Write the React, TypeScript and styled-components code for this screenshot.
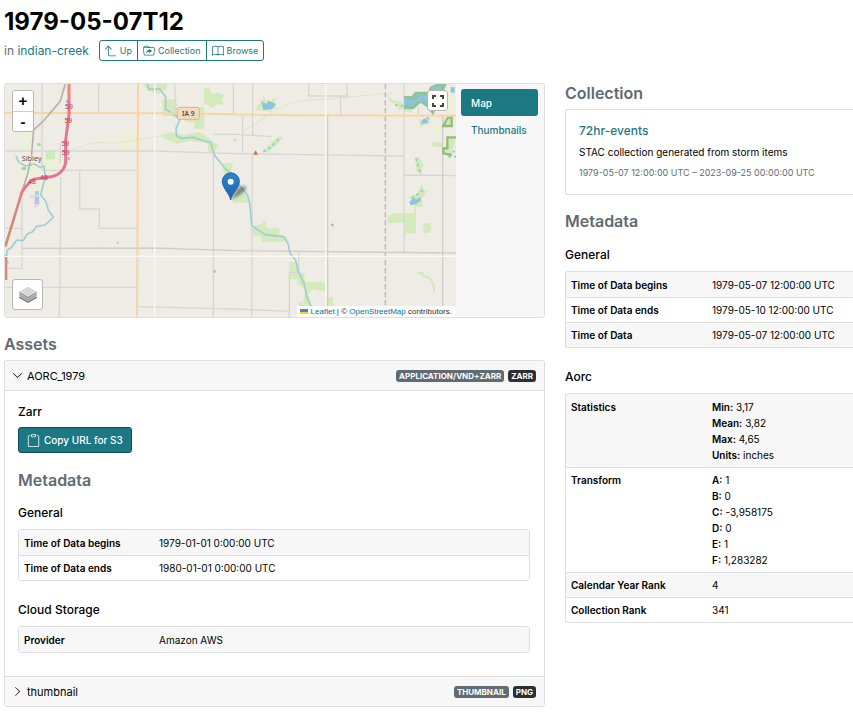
import React, { useState } from "react";
import styled, { createGlobalStyle } from "styled-components";
import {
  BsArrow90DegUp,
  BsBook,
  BsChevronDown,
  BsChevronRight,
  BsClipboard,
  BsFolderSymlink,
} from "react-icons/bs";

const teal = "#1c7883";
const slate = "#5f6a72";
const line = "#dcdee0";
const panel = "#f7f7f7";

const GlobalStyle = createGlobalStyle`
  *, *::before, *::after { box-sizing: border-box; }
  body {
    margin: 0;
    background: #fff;
    color: #000;
    font: 400 10px/16px Inter, "Liberation Sans", sans-serif;
    overflow-x: hidden;
  }
  button { font: inherit; cursor: pointer; }
  h1, h2, h3, h4, p { margin: 0; }
  a { color: ${teal}; text-decoration: none; }
`;

const Page = styled.div`
  padding: 6px 0 9px 4px;
`;

const Title = styled.h1`
  font-size: 24px;
  line-height: 32px;
  font-weight: 700;
`;

const SubHeader = styled.div`
  display: flex;
  align-items: center;
  gap: 10px;
  margin: 2px 0 22px;
`;

const Location = styled.p`
  font-size: 12px;
  line-height: 20px;
  color: ${slate};
`;

const ButtonGroup = styled.nav`
  display: flex;
  border: 1px solid ${teal};
  border-radius: 3px;
`;

const GroupLink = styled.a`
  display: flex;
  align-items: center;
  gap: 3px;
  height: 19px;
  padding: 0 5px;
  font-size: 9px;
  & + & { border-left: 1px solid ${teal}; }
  svg { width: 12px; height: 12px; }
`;

const Columns = styled.main`
  display: grid;
  grid-template-columns: minmax(0, 541fr) minmax(0, 288fr);
  column-gap: 20px;
  align-items: start;
`;

const SectionTitle = styled.h2`
  font-size: 16px;
  line-height: 20px;
  font-weight: 600;
  color: ${slate};
`;

const GroupTitle = styled.h3`
  font-size: 12px;
  line-height: 16px;
  font-weight: 500;
`;

const Section = styled.section<{ $gap?: number }>`
  display: flex;
  flex-direction: column;
  gap: ${(p) => p.$gap ?? 6}px;
`;

const LeftColumn = styled.div`
  display: flex;
  flex-direction: column;
  gap: 16px;
`;

const RightColumn = styled.div`
  display: flex;
  flex-direction: column;
  gap: 16px;
`;

const MapCard = styled.section`
  display: flex;
  background: ${panel};
  border: 1px solid ${line};
  border-radius: 3px;
  overflow: hidden;
`;

const MapPane = styled.div`
  position: relative;
  flex: 1;
  min-width: 0;
  height: 233px;
  overflow: hidden;
`;

const MapDrawing = styled.svg`
  display: block;
  width: 100%;
  height: 100%;
`;

const ZoomControl = styled.div`
  position: absolute;
  top: 6px;
  left: 7px;
  display: flex;
  flex-direction: column;
  width: 22px;
  border: 1px solid #b9b7b2;
  border-radius: 3px;
  overflow: hidden;
`;

const ZoomButton = styled.button`
  height: 20px;
  padding: 0;
  border: 0;
  background: #fff;
  font: 700 15px/20px "Liberation Sans", sans-serif;
  & + & { border-top: 1px solid #ccc; }
`;

const IconControl = styled.button<{ $size: number }>`
  position: absolute;
  display: grid;
  place-items: center;
  width: ${(p) => p.$size}px;
  height: ${(p) => p.$size}px;
  padding: 0;
  background: #fff;
  border: 1px solid #b9b7b2;
  border-radius: 3px;
`;

const FullscreenControl = styled(IconControl)`
  top: 6px;
  right: 8px;
`;

const LayersControl = styled(IconControl)`
  bottom: 7px;
  left: 7px;
`;

const Attribution = styled.div`
  position: absolute;
  right: 0;
  bottom: 0;
  display: flex;
  align-items: center;
  gap: 3px;
  padding: 0 4px 0 3px;
  background: rgba(255, 255, 255, 0.8);
  color: #333;
  font: 8px/11px "Liberation Sans", sans-serif;
  white-space: nowrap;
  a { color: #0078a8; }
`;

const TabList = styled.div`
  display: flex;
  flex-direction: column;
  flex: 0 0 88px;
  min-width: 0;
  padding: 5px 6px 0 5px;
`;

const Tab = styled.button<{ $active: boolean }>`
  height: 27px;
  padding: 0 10px;
  border: 0;
  border-radius: 3px;
  text-align: left;
  font-weight: 500;
  color: ${(p) => (p.$active ? "#fff" : teal)};
  background: ${(p) => (p.$active ? teal : "transparent")};
`;

const Accordion = styled.div`
  border: 1px solid ${line};
  border-radius: 3px;
  overflow: hidden;
`;

const AssetHeader = styled.button`
  display: flex;
  align-items: center;
  gap: 4px;
  width: 100%;
  height: 29px;
  padding: 0 8px 0 7px;
  border: 0;
  background: ${panel};
  color: #000;
  text-align: left;
  svg { width: 11px; height: 11px; }
`;

const AssetName = styled.span`
  flex: 1;
  font-size: 11px;
`;

const Badge = styled.span<{ $dark?: boolean }>`
  padding: 0 3px;
  border-radius: 3px;
  background: ${(p) => (p.$dark ? "#2b2f33" : "#616b73")};
  color: #fff;
  font-size: 8px;
  line-height: 12px;
  font-weight: 700;
  text-transform: uppercase;
`;

const AssetBody = styled.div`
  display: flex;
  flex-direction: column;
  gap: 17px;
  padding: 13px 14px 23px 13px;
  border: solid ${line};
  border-width: 1px 0;
`;

const CopyButton = styled.button`
  display: flex;
  align-items: center;
  align-self: flex-start;
  gap: 4px;
  height: 26px;
  padding: 0 8px;
  border: 1px solid #124c54;
  border-radius: 3px;
  background: ${teal};
  color: #fff;
  font-weight: 500;
  svg { width: 13px; height: 13px; }
`;

const Groups = styled.div`
  display: flex;
  flex-direction: column;
  gap: 21px;
`;

const MetaTable = styled.table<{ $label: number; $bleed?: boolean }>`
  width: 100%;
  border: 1px solid ${line};
  border-right-width: ${(p) => (p.$bleed ? 0 : 1)}px;
  border-radius: ${(p) => (p.$bleed ? "3px 0 0 3px" : "3px")};
  border-spacing: 0;
  overflow: hidden;
  tr:nth-child(odd) { background: ${panel}; }
  th, td { padding: 5px 5px 4px; vertical-align: top; text-align: left; }
  tr + tr > * { padding-top: 4px; border-top: 1px solid ${line}; }
  th { width: ${(p) => p.$label}px; font-weight: 600; }
`;

const ValueList = styled.ul`
  margin: 0;
  padding: 0;
  list-style: none;
  b { font-weight: 600; }
`;

const CollectionCard = styled.article`
  display: flex;
  flex-direction: column;
  gap: 5px;
  padding: 12px 13px;
  border: 1px solid ${line};
  border-right: 0;
  border-radius: 3px 0 0 3px;
`;

const CardLink = styled.a`
  font-size: 12px;
  line-height: 17px;
  font-weight: 500;
`;

const CardText = styled.p`
  line-height: 16px;
`;

const CardDates = styled.p`
  margin-bottom: 1px;
  font-size: 9px;
  line-height: 16px;
  color: ${slate};
`;

/* ---- map ---- */

const parks = [
  "M428 12H500V28L475 42L445 32Z",
  "M487 58H530V95H560V108L540 120L515 108H487Z",
  "M612 25L628 20L635 42L655 38L672 45L665 58L672 72L645 75L640 85L612 68Z",
  "M583 82H613V146H583V128L555 124V112H583Z",
  "M480 168L510 156L555 165L600 155L640 185L656 195L640 220L625 215L622 190L570 182L530 192Z",
  "M665 250H698V262L690 285L712 300V330L740 345L748 368H700L690 320L672 280Z",
  "M758 440L785 433V422L800 424L798 440L812 450V445H838V465L862 472V485H785V472L758 466Z",
  "M868 546H888L900 580H912L915 606H950L975 608V635L940 628L925 640L932 672L945 690V700H896V665H910L915 628L895 612V598H868Z",
  "M985 652H1000V680H975V665Z",
  "M1178 400H1242V355L1262 350L1270 380H1248V460H1218L1210 495L1214 460V428H1178V432L1162 428V412Z",
  "M1270 430H1288L1294 445L1290 460H1270Z",
  "M1160 45L1180 60L1205 66L1215 80L1195 92L1192 74L1170 66Z",
  "M1215 78H1235V95H1210Z",
  "M1298 185H1330V200H1298Z",
  "M1255 115L1270 125L1290 112V128L1262 140Z",
  "M788 210L800 202L820 182L840 168L848 175L830 195L800 220Z",
  "M1225 350L1250 342L1265 312L1275 335L1285 328L1270 352L1240 362Z",
  "M1245 230L1258 232L1268 252L1275 250L1265 265L1268 288L1250 275Z",
  "M1245 578L1270 575L1272 588Z",
  "M766 92L772 75L782 70L778 55L790 62L788 44L798 60L815 64L820 52L829 54L822 70L832 86L815 84L815 96L790 92Z",
];

const scrub = [
  "M355 155H418L430 205L375 212L355 190Z",
  "M66 150H100V212H66Z",
  "M1300 105H1328V165H1300Z",
  "M1328 52H1368V100L1328 112Z",
  "M45 270L120 230L170 240L180 270L150 285L120 265L90 300L60 290Z",
  "M95 325L120 308H170V340H95Z",
];

const roads = [
  "M126 12V271M296 12V97M525 12V98M700 12V101M181 190V250M182 290L181 500L178 713",
  "M15 213H464L705 221L1210 228M126 271H414M239 271V387H298V445H412",
  "M66 345V565H15M15 445H66M15 622H410M640 219V713M414 680L705 687L868 694",
  "M640 163H705L815 170M728 107V222M758 12V165M757 226L755 713M926 12V48H1041V12M1022 48V105",
  "M1212 12V518M1212 285L1368 287M896 518V577H868V713M1255 80V105M1328 112V150",
];

const Shields = () => (
  <g fontFamily="Liberation Sans, sans-serif" fontSize="21" fill="#b8405c" textAnchor="middle">
    <text x="207" y="86">59</text>
    <text x="205" y="129">59</text>
    <text x="196" y="198">59</text>
    <text x="197" y="225">59</text>
    <text x="96" y="311">48</text>
    <text x="132" y="299">48</text>
  </g>
);

const StreetMap = () => (
  <MapDrawing viewBox="15 12 1353 699" preserveAspectRatio="xMinYMin slice" role="img" aria-label="Street map">
    <defs>
      <linearGradient id="pin" x1="0" y1="0" x2="0" y2="1">
        <stop offset="0" stopColor="#2f86cc" />
        <stop offset="1" stopColor="#1c61ab" />
      </linearGradient>
      <filter id="soft" x="-30%" y="-30%" width="160%" height="160%">
        <feGaussianBlur stdDeviation="4" />
      </filter>
    </defs>
    <rect x="0" y="0" width="2400" height="1400" fill="#efece5" />
    {scrub.map((d) => (
      <path key={d} d={d} fill="#edf0d8" />
    ))}
    {parks.map((d) => (
      <path key={d} d={d} fill="#d4e9bc" />
    ))}
    <path d="M138 215H165V238H138Z" fill="#c5eeba" />
    <path d="M95 345H118V375L102 385V355H90V345Z" fill="#e3d5ea" />
    <path d="M205 213C250 200 275 180 330 190C400 185 440 175 495 165M730 155C780 125 830 80 900 62C990 60 1080 45 1180 40" fill="none" stroke="#e0e7cf" strokeWidth="4" />
    <path d="M1270 588C1295 590 1302 610 1302 635" fill="none" stroke="#d2e9b8" strokeWidth="6" />
    <g fill="none" stroke="#d8d6d3" strokeWidth="4">
      {roads.map((d) => (
        <path key={d} d={d} />
      ))}
    </g>
    <path d="M983 107V713M66 505L464 504L705 512L1368 519M1328 107V713" fill="none" stroke="#cfcdcb" strokeWidth="4" />
    <path d="M1156 12V713" stroke="#cfb8cb" strokeWidth="5" strokeDasharray="16 8" />
    <g fill="none" stroke="#9fced5" strokeWidth="5" strokeLinejoin="round">
      <path d="M442 12L446 28L478 26L497 50V88L520 102L540 118L528 145L530 168L545 175L580 172L605 180L632 188L645 228L675 265L700 290L725 325L743 345L750 375L755 437L795 464L850 470L864 490L870 520L887 541L895 575L912 610L922 655L935 680" />
      <path d="M48 228L55 245L75 258L105 252L120 262L132 258L136 290L122 345L138 365L145 390L160 412L135 435L108 440L98 455L82 462L70 482L50 480L35 502L22 510L18 540L26 550" />
    </g>
    <path d="M1212 48L1235 48L1245 35H1285L1290 20L1310 12H1340L1330 35L1310 75L1300 108L1285 85L1262 68L1240 88L1212 86Z" fill="#8fc29e" />
    <g fill="#8fc4d8">
      <path d="M1212 55L1240 62L1262 45H1285L1300 22H1325L1310 65L1298 82L1280 66L1250 64L1240 78L1212 76Z" />
      <path d="M784 64L800 72L805 62L828 72L818 86L790 90Z" />
      <path d="M1228 365L1240 355L1252 358L1262 350V362L1248 372L1232 376Z" />
      <path d="M1268 118L1280 115L1285 128L1262 132Z" />
      <path d="M1352 22H1364V38H1352Z" />
      <path d="M198 60H205V68H198ZM202 232H210V240H202ZM993 431H1001V439H993Z" />
      <path d="M105 333H117V345H105ZM105 350H117V372H105Z" opacity="0.7" />
    </g>
    <g stroke="#8dcbc4" strokeWidth="5" fill="none" strokeDasharray="8 9">
      <path d="M790 215L815 200L835 178M1185 75L1210 78M1248 235L1255 260L1262 280M1235 355L1270 330M1265 105L1295 120" />
      <path d="M1340 215H1365M1345 230H1368M1350 200H1368" />
    </g>
    <path d="M1355 110V138H1330L1342 115ZM1368 172H1342V205H1330V220L1355 225" fill="#d5e8b9" stroke="#8fbd7d" strokeWidth="7" />
    <path d="M65 262H78V270H65ZM112 190H122V197H112ZM350 485H356V491H350ZM641 571H648V578H641ZM702 178H707V184H702Z" fill="#a4ceb1" />
    <path d="M15 99L540 100L870 106L1368 107M414 12L413 345L411 713" fill="none" stroke="#f8d3a6" strokeWidth="6" />
    <path d="M196 12L180 65L130 123L101 150L94 232L82 285L62 345" fill="none" stroke="#b4b2b0" strokeWidth="5" />
    <path d="M207 12V105L197 180V248C190 282 165 292 130 293L100 298C78 315 66 335 62 345" fill="none" stroke="#e8748f" strokeWidth="9" />
    <path d="M207 12V60" stroke="#f08a76" strokeWidth="6" />
    <path d="M66 335L16 500M18 525V600" fill="none" stroke="#ed8673" strokeWidth="8" />
    <path d="M66 340L16 495" stroke="#a9938d" strokeWidth="3" />
    <Shields />
    <path d="M464 12V713M977 12V713M15 529H1368" stroke="#faf9f7" strokeWidth="4" />
    <rect x="532" y="82" width="66" height="36" rx="5" fill="#f5dac2" stroke="#d8b596" strokeWidth="3" />
    <text x="565" y="108" textAnchor="middle" fontFamily="Noto Sans, sans-serif" fontSize="20" fontWeight="600" fill="#5e4c3b">IA 9</text>
    <text x="95" y="243" textAnchor="middle" fontFamily="Noto Sans, sans-serif" fontSize="22" fill="#4c4c4c" stroke="#f5f3ee" strokeWidth="4" paintOrder="stroke">Sibley</text>
    <path d="M767 211L774 224H760Z" fill="#c8743d" />
    <path d="M692 359L716 322L738 318Q742 336 692 359Z" fill="#333" opacity="0.55" filter="url(#soft)" />
    <path d="M692 360C690 342 667 325 667 304A25 25 0 0 1 718 304C718 325 694 342 692 360Z" fill="url(#pin)" stroke="#1f64a8" strokeWidth="3" />
    <circle cx="692" cy="305" r="9" fill="#fff" />
  </MapDrawing>
);

const FullscreenIcon = () => (
  <svg width="12" height="12" viewBox="0 0 12 12" fill="none" stroke="#444" strokeWidth="2" aria-hidden="true">
    <path d="M1 4V1H4M8 1H11V4M11 8V11H8M4 11H1V8" />
  </svg>
);

const LayersIcon = () => (
  <svg width="18" height="18" viewBox="0 0 18 18" aria-hidden="true">
    <path d="M0 11L9 6L18 11V12L9 17L0 12Z" fill="#7c7c7c" />
    <path d="M0 8.500L9 4L18 8.500V10L9 15L0 10Z" fill="#a2a2a2" stroke="#fff" strokeWidth=".4" />
    <path d="M0 6L9 1L18 6V7.500L9 12.500L0 7.500Z" fill="#888" stroke="#fff" strokeWidth=".4" />
    <path d="M0 6L9 1L18 6L9 11Z" fill="#d9d9d9" />
  </svg>
);

const FlagIcon = () => (
  <svg width="8" height="6" viewBox="0 0 8 6" aria-hidden="true">
    <path d="M0 0H8V3H0Z" fill="#4c7be1" />
    <path d="M0 3H8V5H0Z" fill="#ffd500" />
  </svg>
);

/* ---- metadata ---- */

type Value = string | [string, string][];
type Group = { title: string; rows: [string, Value][] };

const MetadataGroup = ({ group, label, bleed }: { group: Group; label: number; bleed?: boolean }) => (
  <Section $gap={8}>
    <GroupTitle>{group.title}</GroupTitle>
    <MetaTable $label={label} $bleed={bleed}>
      <tbody>
        {group.rows.map(([name, value]) => (
          <tr key={name}>
            <th scope="row">{name}</th>
            <td>
              {typeof value === "string" ? (
                value
              ) : (
                <ValueList>
                  {value.map(([key, v]) => (
                    <li key={key}>
                      <b>{key}:</b> {v}
                    </li>
                  ))}
                </ValueList>
              )}
            </td>
          </tr>
        ))}
      </tbody>
    </MetaTable>
  </Section>
);

const assetGroups: Group[] = [
  {
    title: "General",
    rows: [
      ["Time of Data begins", "1979-01-01 0:00:00 UTC"],
      ["Time of Data ends", "1980-01-01 0:00:00 UTC"],
    ],
  },
  { title: "Cloud Storage", rows: [["Provider", "Amazon AWS"]] },
];

const itemGroups: Group[] = [
  {
    title: "General",
    rows: [
      ["Time of Data begins", "1979-05-07 12:00:00 UTC"],
      ["Time of Data ends", "1979-05-10 12:00:00 UTC"],
      ["Time of Data", "1979-05-07 12:00:00 UTC"],
    ],
  },
  {
    title: "Aorc",
    rows: [
      ["Statistics", [["Min", "3,17"], ["Mean", "3,82"], ["Max", "4,65"], ["Units", "inches"]]],
      ["Transform", [["A", "1"], ["B", "0"], ["C", "-3,958175"], ["D", "0"], ["E", "1"], ["F", "1,283282"]]],
      ["Calendar Year Rank", "4"],
      ["Collection Rank", "341"],
    ],
  },
];

export default function App() {
  const [tab, setTab] = useState("Map");
  const [open, setOpen] = useState(true);
  return (
    <>
      <GlobalStyle />
      <Page>
        <header>
          <Title>1979-05-07T12</Title>
          <SubHeader>
            <Location>
              in <a href="#catalog">indian-creek</a>
            </Location>
            <ButtonGroup aria-label="Item navigation">
              <GroupLink href="#up"><BsArrow90DegUp />Up</GroupLink>
              <GroupLink href="#collection"><BsFolderSymlink />Collection</GroupLink>
              <GroupLink href="#browse"><BsBook />Browse</GroupLink>
            </ButtonGroup>
          </SubHeader>
        </header>
        <Columns>
          <LeftColumn>
            <MapCard>
              <MapPane>
                <StreetMap />
                <ZoomControl>
                  <ZoomButton aria-label="Zoom in">+</ZoomButton>
                  <ZoomButton aria-label="Zoom out">-</ZoomButton>
                </ZoomControl>
                <FullscreenControl $size={21} aria-label="Full screen"><FullscreenIcon /></FullscreenControl>
                <LayersControl $size={31} aria-label="Layers"><LayersIcon /></LayersControl>
                <Attribution>
                  <FlagIcon />
                  <span>
                    <a href="#leaflet">Leaflet</a> | © <a href="#osm">OpenStreetMap</a> contributors.
                  </span>
                </Attribution>
              </MapPane>
              <TabList role="tablist">
                {["Map", "Thumbnails"].map((name) => (
                  <Tab key={name} role="tab" aria-selected={tab === name} $active={tab === name} onClick={() => setTab(name)}>
                    {name}
                  </Tab>
                ))}
              </TabList>
            </MapCard>
            <Section>
              <SectionTitle>Assets</SectionTitle>
              <Accordion>
                <AssetHeader aria-expanded={open} onClick={() => setOpen(!open)}>
                  {open ? <BsChevronDown /> : <BsChevronRight />}
                  <AssetName>AORC_1979</AssetName>
                  <Badge>application/vnd+zarr</Badge>
                  <Badge $dark>Zarr</Badge>
                </AssetHeader>
                {open && (
                  <AssetBody>
                    <Section $gap={7}>
                      <GroupTitle>Zarr</GroupTitle>
                      <CopyButton><BsClipboard />Copy URL for S3</CopyButton>
                    </Section>
                    <Section $gap={15}>
                      <SectionTitle>Metadata</SectionTitle>
                      <Groups>
                        {assetGroups.map((g) => (
                          <MetadataGroup key={g.title} group={g} label={135} />
                        ))}
                      </Groups>
                    </Section>
                  </AssetBody>
                )}
                <AssetHeader aria-expanded={false}>
                  <BsChevronRight />
                  <AssetName>thumbnail</AssetName>
                  <Badge>thumbnail</Badge>
                  <Badge $dark>PNG</Badge>
                </AssetHeader>
              </Accordion>
            </Section>
          </LeftColumn>
          <RightColumn>
            <Section>
              <SectionTitle>Collection</SectionTitle>
              <CollectionCard>
                <CardLink href="#72hr-events">72hr-events</CardLink>
                <CardText>STAC collection generated from storm items</CardText>
                <CardDates>1979-05-07 12:00:00 UTC – 2023-09-25 00:00:00 UTC</CardDates>
              </CollectionCard>
            </Section>
            <Section $gap={16}>
              <SectionTitle>Metadata</SectionTitle>
              <Groups>
                {itemGroups.map((g) => (
                  <MetadataGroup key={g.title} group={g} label={141} bleed />
                ))}
              </Groups>
            </Section>
          </RightColumn>
        </Columns>
      </Page>
    </>
  );
}
